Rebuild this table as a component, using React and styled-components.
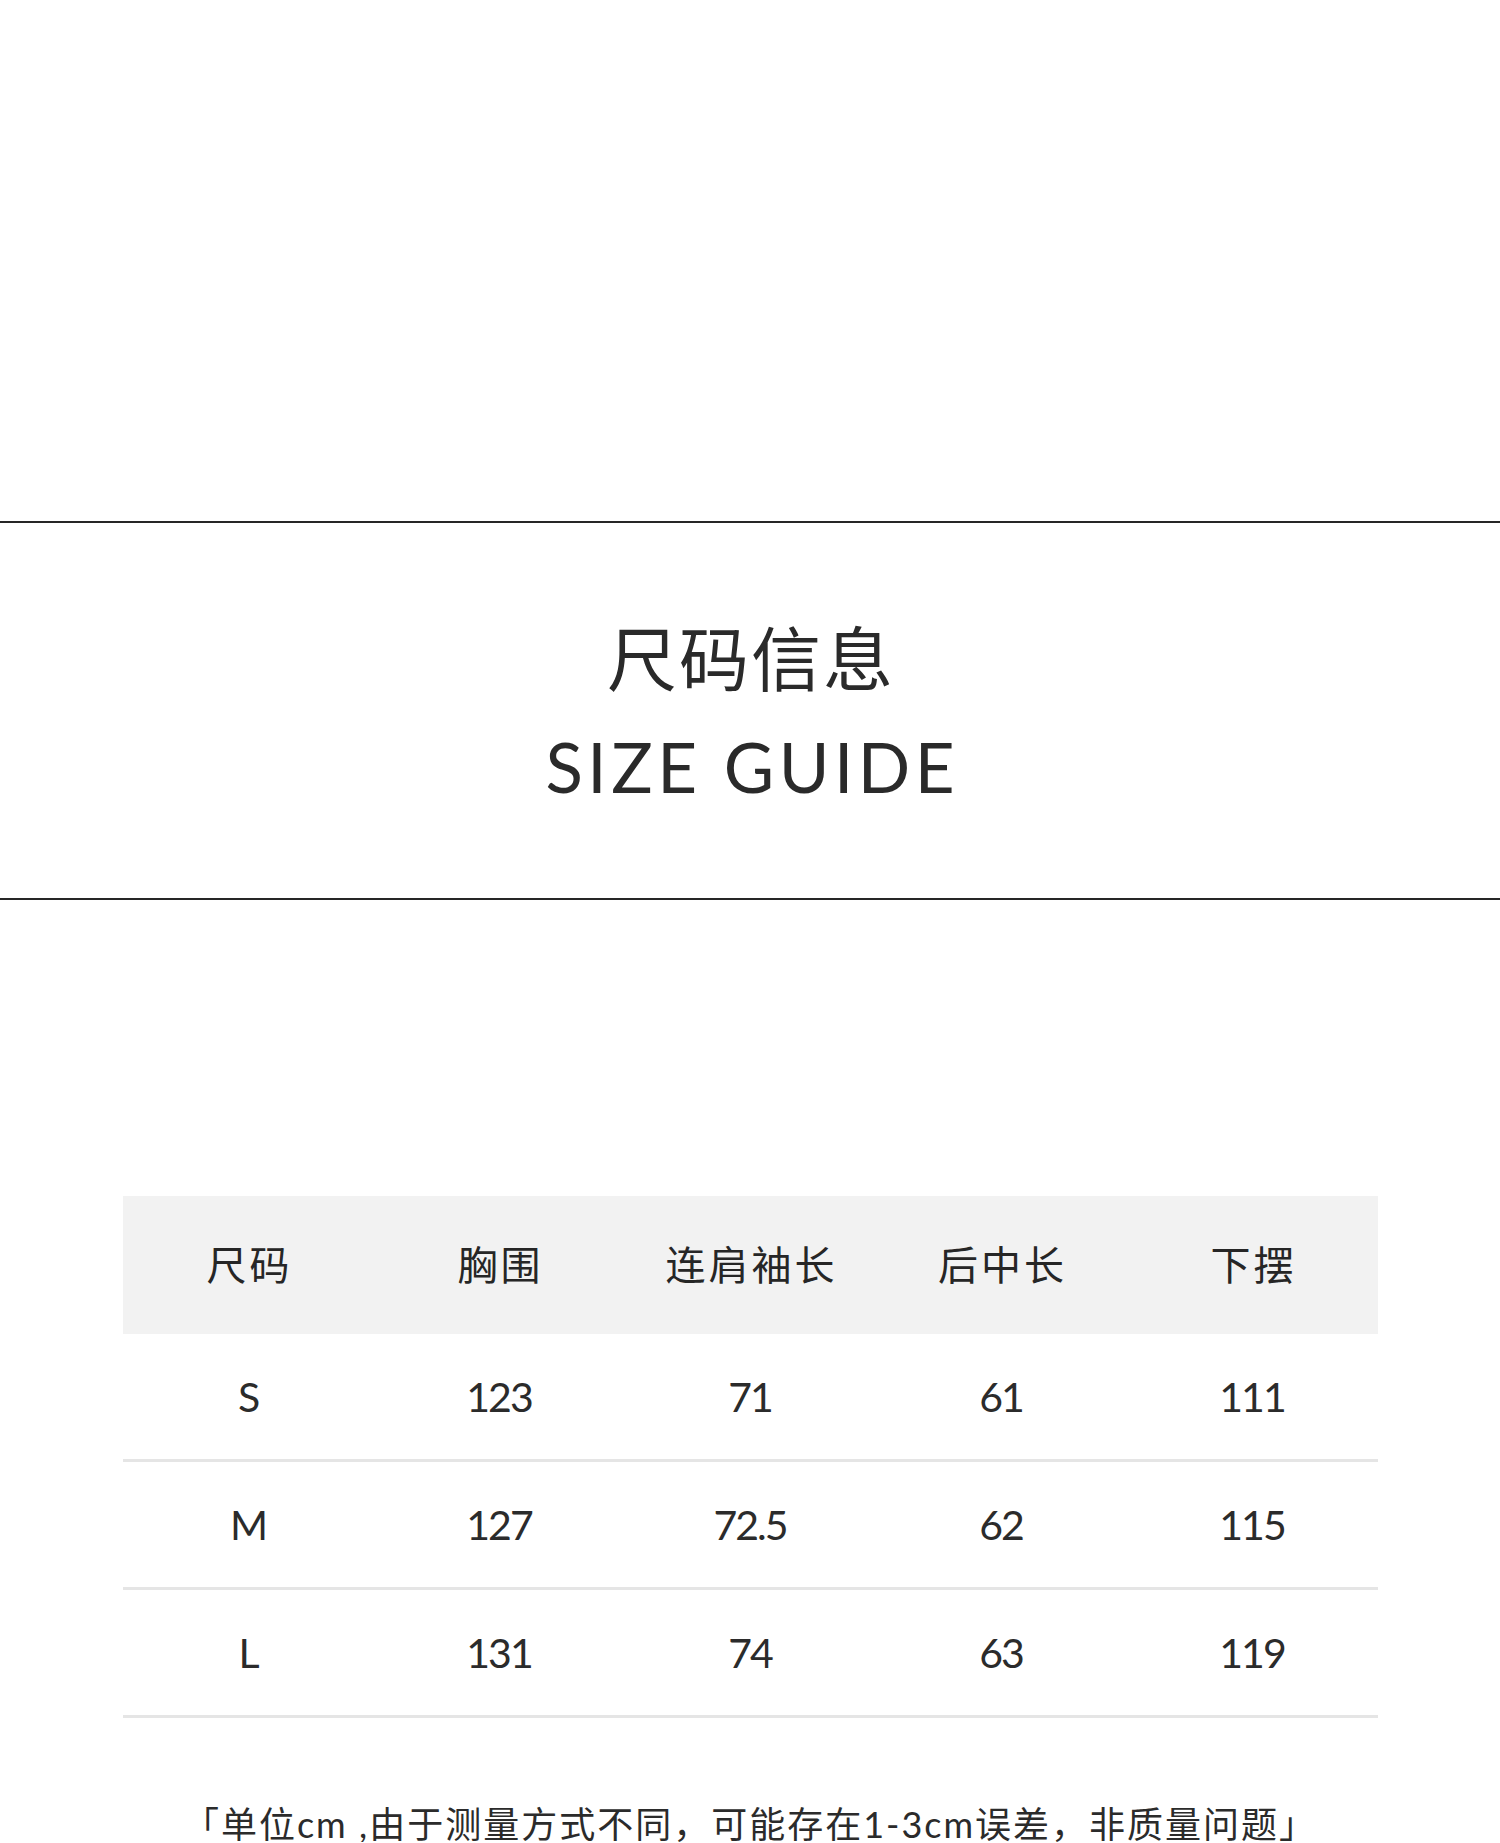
import styled, { createGlobalStyle } from "styled-components";

const GlobalStyle = createGlobalStyle`
    body {
        margin: 0;
        background: #ffffff;
        color: #2b2b2b;
        font-family: "Noto Sans CJK SC", "Noto Sans", sans-serif;
    }
`;

const headers = ["尺码", "胸围", "连肩袖长", "后中长", "下摆"];

const rows = [
    ["S", "123", "71", "61", "111"],
    ["M", "127", "72.5", "62", "115"],
    ["L", "131", "74", "63", "119"],
];

function App() {
    return (
        <>
            <GlobalStyle/>
            <Page>
                <TopSpace/>
                <Rule/>
                <TitleBlock>
                    <TitleCn>尺码信息</TitleCn>
                    <TitleEn>SIZE GUIDE</TitleEn>
                </TitleBlock>
                <Rule/>

                <SizeTable>
                    <HeadRow>
                        {headers.map(h => (
                            <HeadCell key={h}>{h}</HeadCell>
                        ))}
                    </HeadRow>
                    {rows.map(r => (
                        <BodyRow key={r[0]}>
                            {r.map((v, i) => (
                                <BodyCell key={i}>{v}</BodyCell>
                            ))}
                        </BodyRow>
                    ))}
                </SizeTable>

                <Note>「单位<Latin>cm ,</Latin>由于测量方式不同，可能存在<Latin>1-3cm</Latin>误差，非质量问题」</Note>
            </Page>
        </>
    );
}

export default App;

const Page = styled.div`
    width: 1500px;
    display: flex;
    flex-direction: column;
`;

const TopSpace = styled.div`
    height: 521px;
`;

const Rule = styled.div`
    height: 2px;
    background: #262626;
`;

const TitleBlock = styled.div`
    height: 375px;
    display: flex;
    flex-direction: column;
    align-items: center;
    justify-content: center;
    gap: 41px;
`;

const TitleCn = styled.div`
    font-family: "Noto Sans CJK SC", sans-serif;
    font-size: 70px;
    line-height: 70px;
    letter-spacing: 2px;
    margin-right: -2px;
    color: #2a2a2a;
`;

const TitleEn = styled.div`
    font-family: Lato, "Noto Sans", sans-serif;
    font-size: 69px;
    line-height: 69px;
    letter-spacing: 4.5px;
    margin-right: -4.5px;
    color: #2a2a2a;
`;

const SizeTable = styled.div`
    width: 1255px;
    margin: 296px auto 0;
    display: flex;
    flex-direction: column;
`;

const HeadRow = styled.div`
    height: 138px;
    display: grid;
    grid-template-columns: repeat(5, 1fr);
    align-items: center;
    background: #f2f2f2;
`;

const HeadCell = styled.div`
    text-align: center;
    font-family: "Noto Sans CJK SC", sans-serif;
    font-size: 40px;
    line-height: 40px;
    letter-spacing: 3px;
    padding: 0 0 4px 3px;
    color: #262626;
`;

const BodyRow = styled.div`
    height: 125px;
    display: grid;
    grid-template-columns: repeat(5, 1fr);
    align-items: center;
    border-bottom: 3px solid #e5e5e5;
`;

const BodyCell = styled.div`
    text-align: center;
    font-family: Lato, "Noto Sans", sans-serif;
    font-size: 41px;
    line-height: 41px;
    letter-spacing: -2px;
    color: #2b2b2b;
`;

const Note = styled.div`
    margin-top: 86px;
    text-align: center;
    font-family: "Noto Sans CJK SC", sans-serif;
    font-size: 36px;
    line-height: 36px;
    letter-spacing: 2px;
    color: #2b2b2b;
    white-space: nowrap;
`;

const Latin = styled.span`
    font-family: Lato, "Noto Sans", sans-serif;
`;
